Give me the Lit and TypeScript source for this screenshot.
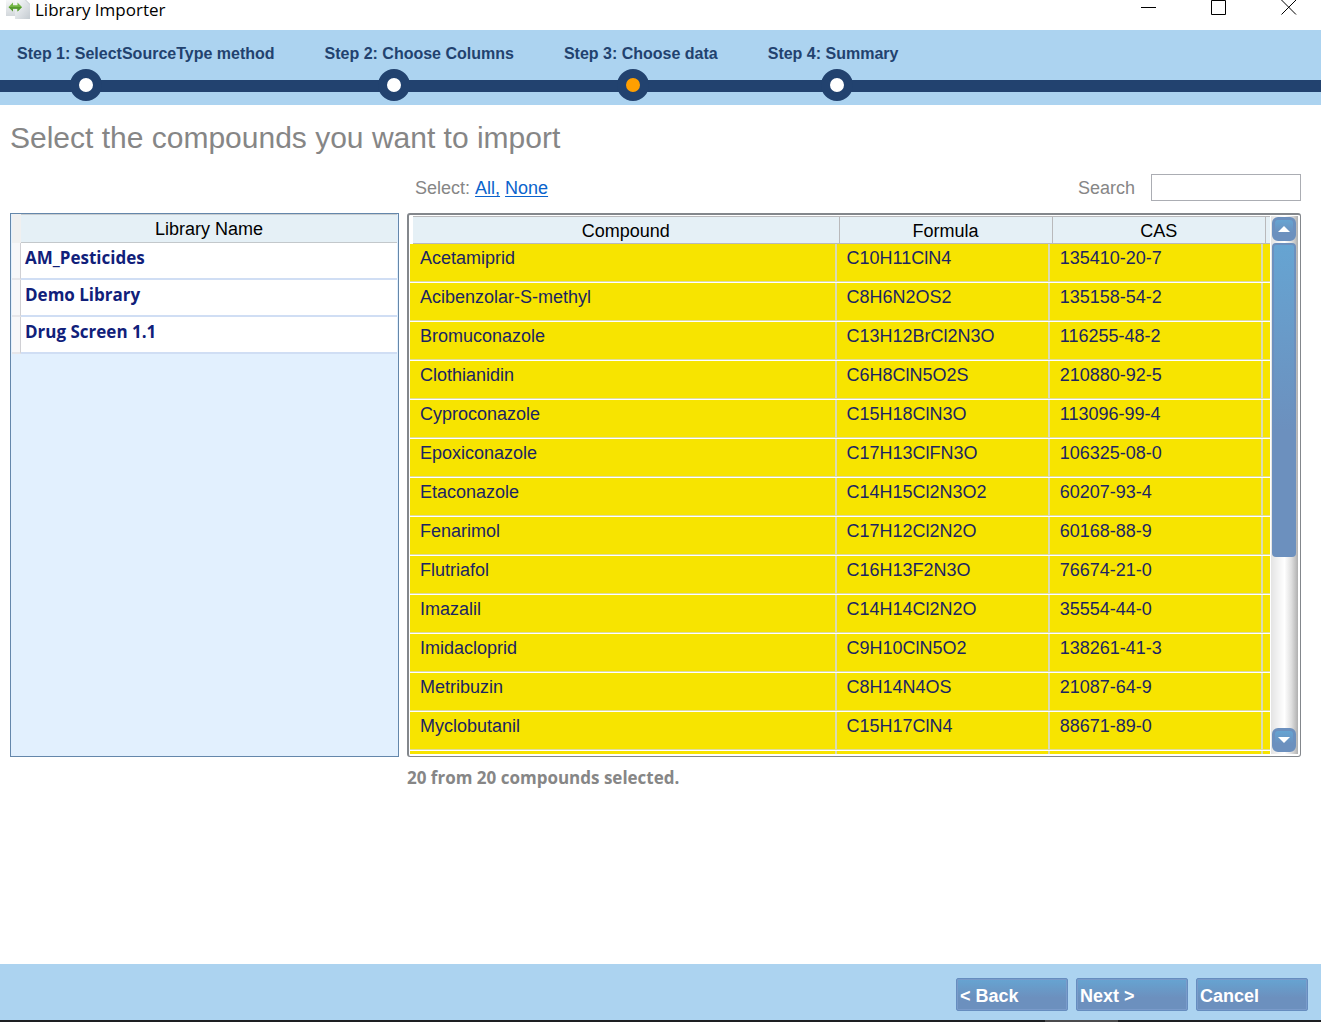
import { LitElement, html, css, svg } from "lit";
import { customElement, state } from "lit/decorators.js";

interface Compound {
  name: string;
  formula: string;
  cas: string;
}

const STEPS = [
  "Step 1: SelectSourceType method",
  "Step 2: Choose Columns",
  "Step 3: Choose data",
  "Step 4: Summary",
];

const LIBRARIES = ["AM_Pesticides", "Demo Library", "Drug Screen 1.1"];

const COMPOUNDS: Compound[] = [
  { name: "Acetamiprid", formula: "C10H11ClN4", cas: "135410-20-7" },
  { name: "Acibenzolar-S-methyl", formula: "C8H6N2OS2", cas: "135158-54-2" },
  { name: "Bromuconazole", formula: "C13H12BrCl2N3O", cas: "116255-48-2" },
  { name: "Clothianidin", formula: "C6H8ClN5O2S", cas: "210880-92-5" },
  { name: "Cyproconazole", formula: "C15H18ClN3O", cas: "113096-99-4" },
  { name: "Epoxiconazole", formula: "C17H13ClFN3O", cas: "106325-08-0" },
  { name: "Etaconazole", formula: "C14H15Cl2N3O2", cas: "60207-93-4" },
  { name: "Fenarimol", formula: "C17H12Cl2N2O", cas: "60168-88-9" },
  { name: "Flutriafol", formula: "C16H13F2N3O", cas: "76674-21-0" },
  { name: "Imazalil", formula: "C14H14Cl2N2O", cas: "35554-44-0" },
  { name: "Imidacloprid", formula: "C9H10ClN5O2", cas: "138261-41-3" },
  { name: "Metribuzin", formula: "C8H14N4OS", cas: "21087-64-9" },
  { name: "Myclobutanil", formula: "C15H17ClN4", cas: "88671-89-0" },
  { name: "", formula: "", cas: "" },
];

const TOTAL = 20;
const VISIBLE = 13;

@customElement("window-bar")
export class WindowBar extends LitElement {
  static styles = css`
    :host {
      display: flex;
      align-items: flex-start;
      height: 30px;
      padding-left: 6px;
      background: #fff;
    }
    .logo {
      flex: none;
      width: 24px;
      height: 20px;
    }
    .title {
      flex: 1;
      margin-left: 5px;
      font: 17px/20px "Open Sans", "Noto Sans", sans-serif;
      color: #000;
    }
    .control {
      box-sizing: border-box;
      width: 70px;
      height: 30px;
      padding: 0 0 0 6px;
      border: 0;
      background: none;
      display: flex;
      justify-content: center;
    }
    .glyph {
      width: 16px;
      height: 16px;
    }
  `;

  render() {
    const glyph = (label: string, shape: unknown) => html`
      <button class="control" aria-label=${label}>
        <svg class="glyph" viewBox="0 0 16 16" fill="none" stroke="#000">${shape}</svg>
      </button>
    `;
    return html`
      <svg class="logo" viewBox="0 0 24 20" aria-hidden="true">
        <defs>
          <linearGradient id="sheet" x1="0" y1="0" x2="1" y2="1">
            <stop offset="0" stop-color="#f9fafb" />
            <stop offset="1" stop-color="#c4cbd1" />
          </linearGradient>
          <linearGradient id="back" x1="0" y1="0" x2="0" y2="1">
            <stop offset="0" stop-color="#f6f7f8" />
            <stop offset="1" stop-color="#d3d8dc" />
          </linearGradient>
        </defs>
        <path d="M0 0H10V16H0Z" fill="url(#back)" />
        <path d="M9 0H20L24 4V19H9Z" fill="url(#sheet)" />
        <path d="M19 0L24 5V4L20 0Z" fill="#c9cfd4" />
        <path d="M2.5 7L7 2.5V5.3H11.5V2.5L16 7L11.5 11.5V8.7H7V11.5Z" fill="#72b544" />
        <path d="M2.5 7H16L11.5 11.5V8.7H7V11.5Z" fill="#559a2f" />
      </svg>
      <span class="title">Library Importer</span>
      ${glyph("Minimize", svg`<path d="M0 7.5H15" />`)}
      ${glyph("Maximize", svg`<path d="M.5 .5H14.5V14.5H.5Z" />`)}
      ${glyph("Close", svg`<path d="M.5 0L15 14.5M15 0L.5 14.5" />`)}
    `;
  }
}

@customElement("step-bar")
export class StepBar extends LitElement {
  static styles = css`
    :host {
      display: block;
      background:
        linear-gradient(#22426f, #22426f) 0 50px / 100% 12px no-repeat,
        #acd3f0;
      color: #22426f;
      font: bold 16px/20px "Liberation Sans", Arial, sans-serif;
    }
    .steps {
      display: flex;
      gap: 50px;
      margin: 0;
      padding: 14px 17px 4px;
      list-style: none;
    }
    .step {
      white-space: nowrap;
    }
    .dot {
      display: block;
      box-sizing: border-box;
      width: 32px;
      height: 32px;
      margin: 5px 0 0 53px;
      border: 9px solid #22426f;
      border-radius: 50%;
      background: #fff;
    }
    .current .dot {
      background: #ff9f00;
    }
  `;

  render() {
    return html`
      <ol class="steps">
        ${STEPS.map(
          (label, i) => html`
            <li class="step ${i === 2 ? "current" : ""}">
              ${label}<span class="dot"></span>
            </li>
          `
        )}
      </ol>
    `;
  }
}

@customElement("library-list")
export class LibraryList extends LitElement {
  static styles = css`
    :host {
      display: block;
      box-sizing: border-box;
      padding: 0 1px;
      border: 1px solid #6487ab;
      background: #e2f0fe;
      overflow: hidden;
    }
    .grid {
      width: 100%;
      border-collapse: separate;
      border-spacing: 0;
      table-layout: fixed;
    }
    th,
    td {
      box-sizing: border-box;
      padding: 0;
    }
    .corner {
      width: 9px;
      background: #f0f0f0;
    }
    .head {
      height: 29px;
      border-top: 1px solid #c8cdd0;
      border-bottom: 1px solid #c3c8cb;
      background: #e5f0f6;
      color: #000;
      font: 18px/26px "Liberation Sans", Arial, sans-serif;
    }
    .handle {
      background: #f7f7f9;
      border-right: 1px solid #d0d0d4;
      border-bottom: 2px solid #e6e6ea;
    }
    .cell {
      height: 37px;
      padding: 5px 0 0 4px;
      border-bottom: 2px solid #d0def4;
      background: #fff;
      color: #10207a;
      font: bold 17px/20px "Open Sans", "Noto Sans", sans-serif;
      vertical-align: top;
    }
  `;

  render() {
    return html`
      <table class="grid">
        <thead>
          <tr>
            <td class="corner"></td>
            <th class="head" scope="col">Library Name</th>
          </tr>
        </thead>
        <tbody>
          ${LIBRARIES.map(
            (name) => html`<tr><td class="handle"></td><td class="cell">${name}</td></tr>`
          )}
        </tbody>
      </table>
    `;
  }
}

@customElement("compound-table")
export class CompoundTable extends LitElement {
  static styles = css`
    :host {
      display: flex;
      box-sizing: border-box;
      padding: 1px 2px 2px 1px;
      border: 1px solid #83878c;
      border-width: 2px 1px 1px 2px;
      border-radius: 3px;
      background: #fff;
      font: 18px/20px "Liberation Sans", Arial, sans-serif;
    }
    .viewport {
      flex: 1;
      min-width: 0;
      overflow: hidden;
    }
    .grid,
    .body {
      display: block;
    }
    .columns {
      display: grid;
      grid-template-columns: 2fr 1fr 1fr 7px;
    }
    .header {
      grid-template-columns: 2fr 1fr 1fr 4px;
      margin-left: 3px;
      border-top: 1px solid #b9b9bb;
      border-bottom: 1px solid #b9b9bb;
      background: #e5f0f6;
    }
    .head {
      height: 26px;
      padding: 0;
      border-right: 1px solid #b9b9bb;
      font-weight: normal;
      line-height: 28px;
      color: #000;
    }
    .head:last-child,
    .cell:last-child {
      border-right: 0;
    }
    .row {
      border-bottom: 1px solid #fff;
      background: #f7e400;
      color: #1b2463;
    }
    .cell {
      box-sizing: border-box;
      height: 38px;
      padding: 4px 0 0 10px;
      border-right: 2px solid #dadbb2;
      border-bottom: 1px solid #dfdc9c;
      white-space: nowrap;
    }
    .cell:last-child {
      padding: 0;
    }
    .scrollbar {
      display: flex;
      flex-direction: column;
      gap: 2px;
      box-sizing: border-box;
      width: 27px;
      padding: 1px 2px 2px 1px;
      margin-left: 1px;
      background: linear-gradient(90deg, #e4e4e4, #fff 50%, #e0e0e0 75%, #b0b0b0);
    }
    .arrow {
      box-sizing: border-box;
      width: 24px;
      height: 24px;
      padding: 0;
      border: 3px solid #6c90be;
      border-radius: 6px;
      background: linear-gradient(#66a4d2, #6c90be 70%);
      display: flex;
      align-items: center;
      justify-content: center;
    }
    .tip {
      width: 12px;
      height: 6px;
    }
    .track {
      flex: 1;
    }
    .thumb {
      box-sizing: border-box;
      width: 24px;
      border: 2px solid #6c90be;
      border-radius: 4px;
      background: linear-gradient(#66a4d2, #6c90be 60%);
    }
  `;

  render() {
    return html`
      <div class="viewport">
        <table class="grid">
          <thead class="body">
            <tr class="columns header">
              <th class="head" scope="col">Compound</th>
              <th class="head" scope="col">Formula</th>
              <th class="head" scope="col">CAS</th>
              <td class="head"></td>
            </tr>
          </thead>
          <tbody class="body">
            ${COMPOUNDS.map(
              (c) => html`
                <tr class="columns row">
                  <td class="cell">${c.name}</td>
                  <td class="cell">${c.formula}</td>
                  <td class="cell">${c.cas}</td>
                  <td class="cell"></td>
                </tr>
              `
            )}
          </tbody>
        </table>
      </div>
      <div class="scrollbar">
        <button class="arrow" aria-label="Scroll up">
          <svg class="tip" viewBox="0 0 12 6"><path d="M0 6L6 0L12 6Z" fill="#fff" /></svg>
        </button>
        <div class="track">
          <div class="thumb" style="height:${(VISIBLE / TOTAL) * 100}%"></div>
        </div>
        <button class="arrow" aria-label="Scroll down">
          <svg class="tip" viewBox="0 0 12 6"><path d="M0 0L6 6L12 0Z" fill="#fff" /></svg>
        </button>
      </div>
    `;
  }
}

@customElement("app-root")
export class AppRoot extends LitElement {
  @state() private query = "";

  static styles = css`
    :host {
      display: flex;
      flex-direction: column;
      min-height: 100vh;
      background: #fff;
      font: 18px/20px "Liberation Sans", Arial, sans-serif;
      color: #868686;
    }
    .main {
      flex: 1;
      padding: 13px 20px 0 10px;
    }
    .heading {
      margin: 0;
      font-size: 30px;
      line-height: 40px;
      font-weight: normal;
    }
    .content {
      display: grid;
      grid-template-columns: 389px minmax(0, 1fr);
      grid-template-rows: 27px auto auto;
      gap: 12px 8px;
      margin-top: 16px;
    }
    .toolbar {
      grid-column: 2;
      display: flex;
      align-items: center;
      padding-left: 8px;
    }
    .link {
      margin-left: 5px;
      color: #0a63cc;
      text-underline-offset: 2px;
      text-decoration-skip-ink: none;
    }
    .label {
      margin-left: auto;
    }
    .search {
      box-sizing: border-box;
      width: 150px;
      height: 27px;
      margin-left: 16px;
      padding: 0 4px;
      border: 1px solid #abadb3;
      background: #fff;
      font: inherit;
    }
    .panel {
      height: calc(100vh - 478px);
      min-height: 240px;
    }
    .status {
      grid-column: 2;
      margin: 0;
      font: bold 17px/18px "Open Sans", "Noto Sans", sans-serif;
    }
    .footer {
      display: flex;
      justify-content: flex-end;
      gap: 8px;
      padding: 14px 13px 9px;
      background: #acd3f0;
    }
    .action {
      width: 112px;
      height: 33px;
      padding: 2px 3px 0;
      border: 1px solid #668dbf;
      border-radius: 2px;
      background: linear-gradient(#66a4d2, #6c90be 60%);
      box-shadow: inset 0 0 0 1px #7a9bca;
      color: #fff;
      font: bold 18px/20px "Liberation Sans", Arial, sans-serif;
      text-align: left;
    }
    .edge {
      height: 2px;
      background:
        linear-gradient(#4b4b4d, #4b4b4d) right 203px top / 73px 2px no-repeat,
        #1d1f22;
    }
  `;

  render() {
    return html`
      <window-bar></window-bar>
      <step-bar></step-bar>
      <main class="main">
        <h1 class="heading">Select the compounds you want to import</h1>
        <div class="content">
          <div class="toolbar">
            <span>Select:</span>
            <a class="link" href="#all">All,</a>
            <a class="link" href="#none">None</a>
            <label class="label" for="search">Search</label>
            <input
              class="search"
              id="search"
              type="text"
              .value=${this.query}
              @input=${(e: Event) => (this.query = (e.target as HTMLInputElement).value)}
            />
          </div>
          <library-list class="panel"></library-list>
          <compound-table class="panel"></compound-table>
          <p class="status">${TOTAL} from ${TOTAL} compounds selected.</p>
        </div>
      </main>
      <footer class="footer">
        <button class="action">&lt; Back</button>
        <button class="action">Next &gt;</button>
        <button class="action">Cancel</button>
      </footer>
      <div class="edge"></div>
    `;
  }
}
